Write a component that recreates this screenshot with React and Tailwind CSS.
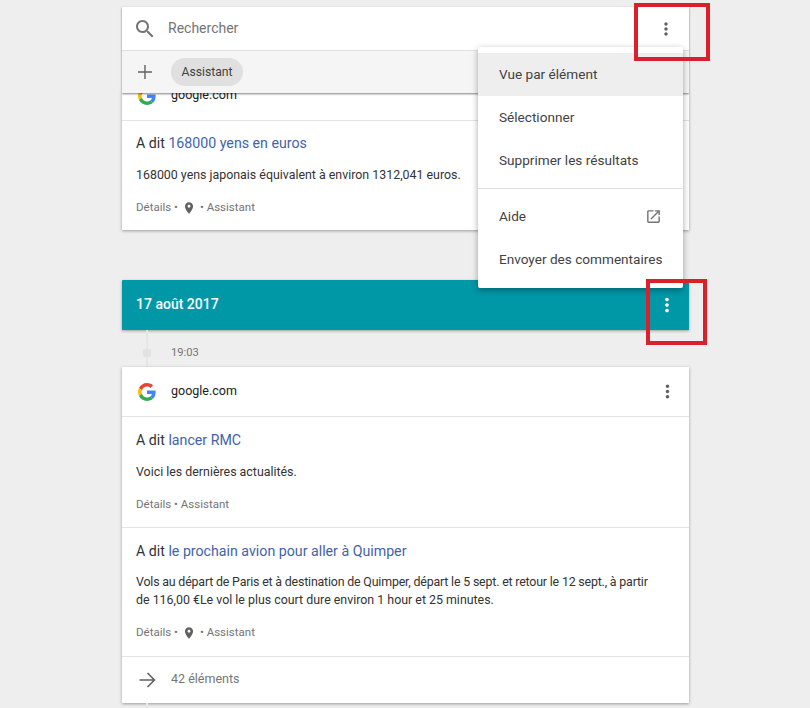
import React from 'react';

const icons = {
  search: "M15.5 14h-.79l-.28-.27C15.41 12.59 16 11.11 16 9.5 16 5.91 13.09 3 9.5 3S3 5.91 3 9.5 5.91 16 9.5 16c1.61 0 3.09-.59 4.23-1.57l.27.28v.79l5 4.99L20.49 19l-4.99-5zm-6 0C7.01 14 5 11.99 5 9.5S7.01 5 9.5 5 14 7.01 14 9.5 11.99 14 9.5 14z",
  add: "M19 12.7h-6.3V19h-1.4v-6.3H5v-1.4h6.3V5h1.4v6.3H19v1.4z",
  more: "M12 8c1.1 0 2-.9 2-2s-.9-2-2-2-2 .9-2 2 .9 2 2 2zm0 2c-1.1 0-2 .9-2 2s.9 2 2 2 2-.9 2-2-.9-2-2-2zm0 6c-1.1 0-2 .9-2 2s.9 2 2 2 2-.9 2-2-.9-2-2-2z",
  pin: "M12 2C8.13 2 5 5.13 5 9c0 5.25 7 13 7 13s7-7.75 7-13c0-3.87-3.13-7-7-7zm0 9.5c-1.38 0-2.5-1.12-2.5-2.5s1.12-2.5 2.5-2.5 2.5 1.12 2.5 2.5-1.12 2.5-2.5 2.5z",
  open: "M19 19H5V5h7V3H5c-1.11 0-2 .9-2 2v14c0 1.1.89 2 2 2h14c1.1 0 2-.9 2-2v-7h-2v7zM14 3v2h3.59l-9.83 9.83 1.41 1.41L19 6.41V10h2V3h-7z",
};

const Icon = ({ name, className }) => (
  <svg viewBox="0 0 24 24" className={className} fill="currentColor">
    <path d={icons[name]} />
  </svg>
);

const GoogleLogo = () => (
  <svg viewBox="0 0 48 48" className="w-[18px] h-[18px] shrink-0">
    <path fill="#EA4335" d="M24 9.5c3.54 0 6.71 1.22 9.21 3.6l6.85-6.85C35.9 2.38 30.47 0 24 0 14.62 0 6.51 5.38 2.56 13.22l7.98 6.19C12.43 13.72 17.74 9.5 24 9.5z" />
    <path fill="#4285F4" d="M46.98 24.55c0-1.57-.15-3.09-.38-4.55H24v9.02h12.94c-.58 2.96-2.26 5.48-4.78 7.18l7.73 6c4.51-4.18 7.09-10.36 7.09-17.65z" />
    <path fill="#FBBC05" d="M10.53 28.59c-.48-1.45-.76-2.99-.76-4.59s.27-3.14.76-4.59l-7.98-6.19C.92 16.46 0 20.12 0 24c0 3.88.92 7.54 2.56 10.78l7.97-6.19z" />
    <path fill="#34A853" d="M24 48c6.48 0 11.93-2.13 15.89-5.81l-7.73-6c-2.15 1.45-4.92 2.3-8.16 2.3-6.26 0-11.57-4.22-13.47-9.91l-7.98 6.19C6.51 42.62 14.62 48 24 48z" />
  </svg>
);

const SiteRow = () => (
  <div className="h-[49px] shrink-0 flex items-center pl-4 pr-[11px]">
    <GoogleLogo />
    <span className="ml-[15px] pb-px text-[12.5px] text-[#212121]">google.com</span>
    <Icon name="more" className="w-[21px] h-[21px] ml-auto text-[#616161]" />
  </div>
);

const Entry = ({ query, lines, pin, first }) => (
  <div className={`px-[14px] border-t border-[#e4e4e4] ${first ? 'pt-[12px]' : 'pt-[13px]'} ${lines.length === 1 ? 'pb-[14px]' : 'pb-[15px]'}`}>
    <p className="text-[14.2px] leading-5 text-[#333333]">
      A dit <span className="text-[#4263ab]">{query}</span>
    </p>
    <div className={lines.length === 1 ? 'mt-[13px]' : 'mt-3'}>
      {lines.map(l => (
        <p key={l.text} className={`text-[12.4px] leading-[18px] whitespace-nowrap text-[#333333] ${l.tight ? 'tracking-[-0.18px]' : ''}`}>{l.text}</p>
      ))}
    </div>
    <div className="mt-4 h-4 flex items-center text-[11.5px] text-[#757575]">
      {pin ? (
        <>
          <span>Détails •</span>
          <Icon name="pin" className="w-[14px] h-[14px] mx-[4px] text-[#616161]" />
          <span>• Assistant</span>
        </>
      ) : (
        <span>Détails • Assistant</span>
      )}
    </div>
  </div>
);

const MenuItem = ({ label, active, children }) => (
  <div className={`h-[43px] flex items-center justify-between pl-[21px] pr-[21px] text-[13.6px] whitespace-nowrap text-[#424242] ${active ? 'bg-[#eeeeee]' : ''}`}>
    <span>{label}</span>
    {children}
  </div>
);

export default function App() {
  return (
    <div className="relative w-[810px] h-[708px] overflow-hidden bg-[#eeeeee] font-['Roboto',sans-serif]">
      <div className="ml-[122px] w-[567px] pt-[7px] flex flex-col">
        {/* Search bar */}
        <div className="relative z-10 shadow-[0_1px_2px_rgba(0,0,0,0.5)]">
          <div className="h-11 bg-white border-b border-[#e0e0e0] flex items-center pl-[11px] pr-[13px]">
            <Icon name="search" className="w-6 h-6 text-[#757575]" />
            <span className="ml-[11px] text-[14px] text-[#757575]">Rechercher</span>
            <Icon name="more" className="w-5 h-5 ml-auto text-[#616161]" />
          </div>
          <div className="h-[42px] bg-[#f5f5f5] flex items-center pl-[11px]">
            <Icon name="add" className="w-6 h-6 text-[#616161]" />
            <span className="ml-[14px] h-[28px] w-[72px] rounded-full bg-[#e0e0e0] flex items-center justify-center text-[12.2px] text-[#424242]">Assistant</span>
          </div>
        </div>

        {/* First card, scrolled under the search bar */}
        <div className="bg-white shadow-[0_1px_3px_rgba(0,0,0,0.35)]">
          <div className="h-[27px] overflow-hidden flex flex-col justify-end">
            <SiteRow />
          </div>
          <Entry first query="168000 yens en euros" lines={[{ text: "168000 yens japonais équivalent à environ 1312,041 euros." }]} pin />
        </div>

        {/* Date banner */}
        <div className="mt-[50px] h-[50px] bg-[#0097a7] rounded-t-[1px] shadow-[0_1px_3px_rgba(0,0,0,0.35)] flex items-center pl-[14px] pr-[11px] text-white">
          <span className="pb-px text-[14px] font-medium">17 août 2017</span>
          <Icon name="more" className="w-[22px] h-[22px] ml-auto" />
        </div>

        <div className="ml-6 h-[37px] pt-[9px] border-l-2 border-[#e6e6e6] flex items-center">
          <span className="w-2 h-2 -ml-[5px] rounded-[2px] bg-[#e2e2e2]" />
          <span className="ml-5 text-[11.2px] text-[#757575]">19:03</span>
        </div>

        {/* Second card */}
        <div className="bg-white shadow-[0_1px_3px_rgba(0,0,0,0.35)]">
          <SiteRow />
          <Entry query="lancer RMC" lines={[{ text: "Voici les dernières actualités." }]} />
          <Entry
            query="le prochain avion pour aller à Quimper"
            lines={[
              { text: "Vols au départ de Paris et à destination de Quimper, départ le 5 sept. et retour le 12 sept., à partir", tight: true },
              { text: "de 116,00 €Le vol le plus court dure environ 1 hour et 25 minutes." },
            ]}
            pin
          />
          <div className="h-[47px] pb-px border-t border-[#e4e4e4] flex items-center pl-[13px]">
            <svg viewBox="0 0 24 24" className="w-6 h-6 text-[#616161]" fill="none" stroke="currentColor" strokeWidth="1.6">
              <path d="M4.5 12h14.5M12.5 5l7 7-7 7" />
            </svg>
            <span className="ml-[12px] text-[12.5px] text-[#757575]">42 éléments</span>
          </div>
        </div>

        <div className="ml-6 h-2 border-l-2 border-[#e6e6e6]" />
      </div>

      {/* Overflow menu */}
      <div className="absolute z-20 left-[478px] top-[47px] w-[205px] h-[241px] py-[6px] bg-white rounded-[2px] shadow-[0_2px_6px_rgba(0,0,0,0.35)]">
        <MenuItem label="Vue par élément" active />
        <MenuItem label="Sélectionner" />
        <MenuItem label="Supprimer les résultats" />
        <div className="my-[6px] h-px bg-[#e0e0e0]" />
        <MenuItem label="Aide">
          <Icon name="open" className="w-[17px] h-[17px] text-[#757575]" />
        </MenuItem>
        <MenuItem label="Envoyer des commentaires" />
      </div>

      {/* Red annotations */}
      <div className="absolute z-30 left-[634px] top-[3px] w-[76px] h-[58px] border-[4px] border-[#d9202c]" />
      <div className="absolute z-30 left-[646px] top-[279px] w-[61px] h-[66px] border-[4px] border-[#d9202c]" />
    </div>
  );
}
